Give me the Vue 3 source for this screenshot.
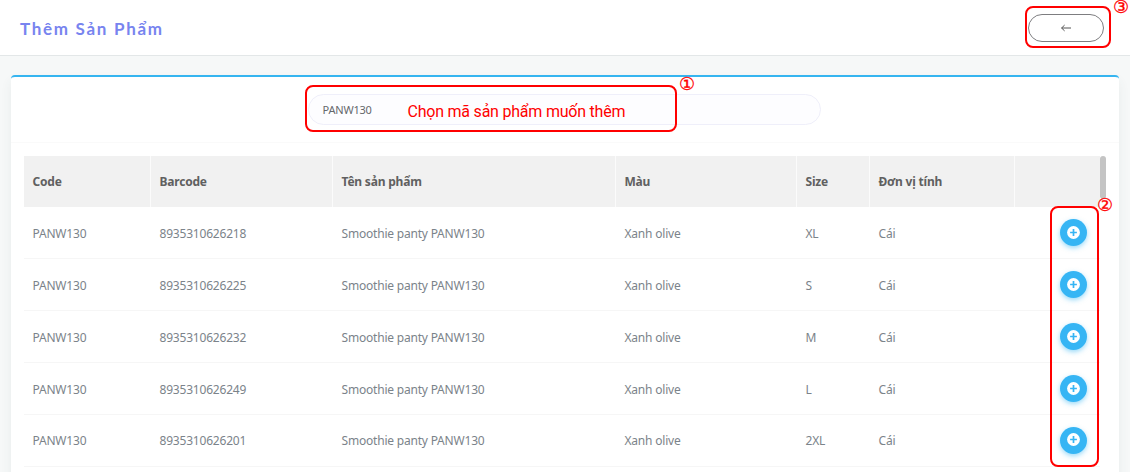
<script setup>
const columns = ['Code', 'Barcode', 'Tên sản phẩm', 'Màu', 'Size', 'Đơn vị tính', '']
const products = [
  { barcode: '8935310626218', size: 'XL' },
  { barcode: '8935310626225', size: 'S' },
  { barcode: '8935310626232', size: 'M' },
  { barcode: '8935310626249', size: 'L' },
  { barcode: '8935310626201', size: '2XL' }
]
</script>

<template>
  <div class="page">
    <header class="topbar">
      <h1>Thêm Sản Phẩm</h1>
      <button class="back" aria-label="Back">
        <svg width="12" height="10" viewBox="0 0 12 10"><path d="M11 5H1.5M4.6 2.1L1.6 5l3 2.9" /></svg>
      </button>
    </header>
    <main class="card">
      <div class="search-bar">
        <div class="search">PANW130</div>
      </div>
      <div class="table-wrap">
        <div class="table">
          <div class="row head">
            <div v-for="(c, i) in columns" :key="i" class="cell"><span>{{ c }}</span></div>
          </div>
          <div v-for="p in products" :key="p.barcode" class="row">
            <div class="cell"><span>PANW130</span></div>
            <div class="cell"><span>{{ p.barcode }}</span></div>
            <div class="cell"><span>Smoothie panty PANW130</span></div>
            <div class="cell"><span>Xanh olive</span></div>
            <div class="cell"><span>{{ p.size }}</span></div>
            <div class="cell"><span>Cái</span></div>
            <div class="cell action">
              <button class="add" aria-label="Add">
                <svg width="13" height="13" viewBox="0 0 13 13">
                  <circle cx="6.5" cy="6.5" r="6.4" fill="#fff" />
                  <path d="M6.5 3.1v6.8M3.1 6.5h6.8" stroke="#36b5f4" stroke-width="1.7" />
                </svg>
              </button>
            </div>
          </div>
        </div>
        <div class="thumb"></div>
      </div>
    </main>
    <div class="mark mark-search"></div>
    <div class="mark mark-actions"></div>
    <div class="mark mark-back"></div>
    <div class="note">Chọn mã sản phẩm muốn thêm</div>
    <div class="num n1">①</div>
    <div class="num n2">②</div>
    <div class="num n3">③</div>
  </div>
</template>

<style>
body { margin: 0; background: #fff; }
</style>

<style scoped>
.page {
  position: relative;
  box-sizing: border-box;
  width: 1130px;
  height: 472px;
  overflow: hidden;
  background: #f6f8f8;
  font-family: "Noto Sans", "Open Sans", sans-serif;
  font-size: 12px;
  letter-spacing: -0.2px;
  color: #7b838a;
}
.topbar {
  box-sizing: border-box;
  height: 56px;
  padding: 0 26px 0 20px;
  display: flex;
  align-items: center;
  justify-content: space-between;
  background: #fff;
  border-bottom: 1px solid #e3e7e8;
}
h1 {
  margin: 2px 0 0;
  font: 700 17px/24px Lato, sans-serif;
  letter-spacing: 1.7px;
  color: #7884ef;
}
.back {
  box-sizing: border-box;
  width: 76px;
  height: 28px;
  padding: 0;
  display: flex;
  align-items: center;
  justify-content: center;
  border: 1px solid #7d7d80;
  border-radius: 14px;
  background: #fff;
}
.back svg { fill: none; stroke: #555; stroke-width: 1; }
.card {
  box-sizing: border-box;
  width: 1108px;
  height: 410px;
  margin: 18.5px 0 0 10.5px;
  background: #fff;
  border-top: 2px solid #36b5f0;
  border-radius: 4px;
  box-shadow: 0 6px 12px rgba(60, 80, 80, 0.07);
}
.search-bar {
  box-sizing: border-box;
  height: 66px;
  padding: 17.5px 0 0 297.5px;
  border-bottom: 1px solid #fafafa;
}
.search {
  box-sizing: border-box;
  width: 513px;
  height: 31px;
  padding-left: 13.5px;
  border: 1px solid #efeffa;
  border-radius: 16px;
  background: #fdfdff;
  font-size: 11px;
  letter-spacing: -0.2px;
  line-height: 30px;
  color: #65686c;
}
.table-wrap {
  display: flex;
  padding: 13.2px 0 0 13px;
}
.row {
  box-sizing: border-box;
  width: 1076px;
  height: 51.9px;
  display: grid;
  grid-template-columns: 126px 182px 283px 181px 73px 145px 86px;
  border-bottom: 1px solid #f6f6f6;
}
.cell {
  display: flex;
  align-items: center;
  padding: 1px 0 0 10px;
  white-space: nowrap;
}
.cell:first-child { padding-left: 9px; }
.head {
  height: 51.8px;
  border-bottom: 0;
  background: #f1f1f1;
  font-weight: 700;
  color: #606060;
}
.head .cell { padding-top: 0; }
.head .cell + .cell { box-shadow: inset 1px 0 #fbfbfb; }
.cell.action { padding: 0 0 0 46.5px; }
.add {
  width: 27px;
  height: 27px;
  padding: 0;
  display: flex;
  align-items: center;
  justify-content: center;
  border: 0;
  border-radius: 50%;
  background: #36b5f4;
  box-shadow: 0 2px 5px rgba(54, 181, 244, 0.5);
}
.add svg { margin-top: -1px; }
.thumb {
  width: 6px;
  height: 43px;
  border-radius: 3px;
  background: #c4c4c4;
}
.mark {
  position: absolute;
  box-sizing: border-box;
  border: 2px solid #ff0000;
  border-radius: 8px;
}
.mark-search { left: 305px; top: 85px; width: 372px; height: 47px; }
.mark-actions { left: 1050px; top: 206px; width: 49px; height: 261px; }
.mark-back { left: 1025px; top: 6px; width: 86px; height: 42px; }
.note {
  position: absolute;
  left: 407.5px;
  top: 100px;
  font: 16px/24px Roboto, sans-serif;
  color: #ff0000;
  white-space: nowrap;
  letter-spacing: -0.22px;
}
.num {
  position: absolute;
  width: 16px;
  height: 16px;
  text-align: center;
  font: 400 18px/16px "DejaVu Sans", sans-serif;
  letter-spacing: 0;
  color: #ff0000;
  -webkit-text-stroke: 0.3px #ff0000;
}
.n1 { left: 679px; top: 76px; }
.n2 { left: 1097px; top: 197px; }
.n3 { left: 1113px; top: -1px; }
</style>
